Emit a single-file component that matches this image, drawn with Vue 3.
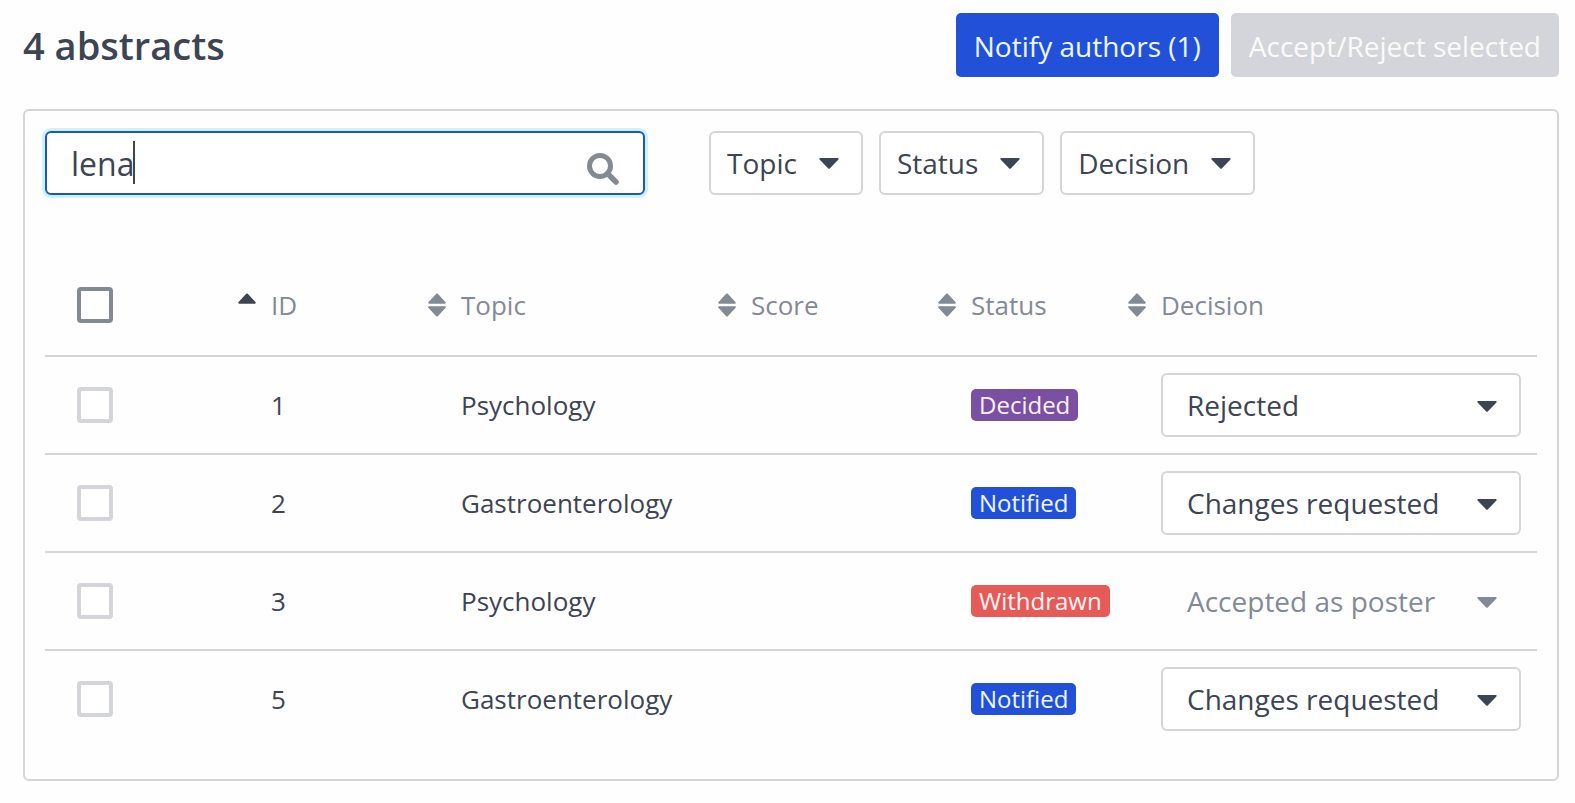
<script setup>
import { ref } from 'vue'

const query = ref('lena')
const filters = ['Topic', 'Status', 'Decision']
const columns = [
  { label: 'ID', sorted: true },
  { label: 'Topic' },
  { label: 'Score' },
  { label: 'Status' },
  { label: 'Decision' },
]
const options = ['Rejected', 'Changes requested', 'Accepted as poster']
const rows = ref([
  { id: 1, topic: 'Psychology', status: 'Decided', decision: 'Rejected' },
  { id: 2, topic: 'Gastroenterology', status: 'Notified', decision: 'Changes requested' },
  { id: 3, topic: 'Psychology', status: 'Withdrawn', decision: 'Accepted as poster', locked: true },
  { id: 5, topic: 'Gastroenterology', status: 'Notified', decision: 'Changes requested' },
])
</script>

<template>
  <main class="page">
    <header class="top">
      <h1>4 abstracts</h1>
      <div class="actions">
        <button type="button" class="btn primary">Notify authors (1)</button>
        <button type="button" class="btn muted" disabled>Accept/Reject selected</button>
      </div>
    </header>

    <section class="card">
      <div class="toolbar">
        <div class="search">
          <input v-model="query" type="text" aria-label="Search abstracts" />
          <span class="cursor"></span>
          <svg class="glass" viewBox="0 0 32 32" aria-hidden="true">
            <circle cx="13" cy="13" r="10.5" fill="none" stroke="currentColor" stroke-width="5" />
            <path d="M20.500 20.500L29 29" fill="none" stroke="currentColor" stroke-width="5.500" stroke-linecap="round" />
          </svg>
        </div>
        <div class="filters">
          <button v-for="f in filters" :key="f" type="button" class="filter">
            {{ f }}
            <svg class="caret" viewBox="0 0 20 11" aria-hidden="true">
              <path d="M1.200 0H18.800Q20.300 .4 19.200 1.700L11 10.300Q10 11.300 9 10.300L.8 1.700Q-.3 .4 1.200 0Z" />
            </svg>
          </button>
        </div>
      </div>

      <table>
        <colgroup>
          <col class="c-check" />
          <col class="c-id" />
          <col class="c-topic" />
          <col class="c-score" />
          <col class="c-status" />
          <col />
        </colgroup>
        <thead>
          <tr>
            <th class="check"><input type="checkbox" aria-label="Select all" /></th>
            <th v-for="c in columns" :key="c.label">
              <button type="button" class="sort">
                <svg viewBox="0 0 18 24" aria-hidden="true" :class="{ on: c.sorted }">
                  <path d="M1 10.700Q-.5 10.200 .6 8.900L8.200 .8Q9 0 9.800 .8L17.400 8.900Q18.500 10.200 17 10.700Z" />
                  <path v-if="!c.sorted" d="M1 13.300Q-.5 13.800 .6 15.100L8.200 23.200Q9 24 9.800 23.200L17.400 15.100Q18.500 13.800 17 13.300Z" />
                </svg>
                {{ c.label }}
              </button>
            </th>
          </tr>
        </thead>
        <tbody>
          <tr v-for="r in rows" :key="r.id">
            <td class="check"><input type="checkbox" :aria-label="`Select abstract ${r.id}`" /></td>
            <td>{{ r.id }}</td>
            <td>{{ r.topic }}</td>
            <td></td>
            <td><span class="badge" :class="r.status.toLowerCase()">{{ r.status }}</span></td>
            <td class="decision">
              <div class="picker" :class="{ locked: r.locked }">
                <select v-model="r.decision" :disabled="r.locked" :aria-label="`Decision for abstract ${r.id}`">
                  <option v-for="o in options" :key="o">{{ o }}</option>
                </select>
                <svg class="caret" viewBox="0 0 20 11" aria-hidden="true">
                  <path d="M1.200 0H18.800Q20.300 .4 19.200 1.700L11 10.300Q10 11.300 9 10.300L.8 1.700Q-.3 .4 1.200 0Z" />
                </svg>
              </div>
            </td>
          </tr>
        </tbody>
      </table>
    </section>
  </main>
</template>

<style>
body {
  background: #fefefe;
}
</style>

<style scoped>
.page,
.page * {
  box-sizing: border-box;
}
.page {
  padding: 13px 16px 22px 23px;
  font-family: "Open Sans", "Noto Sans", sans-serif;
  font-size: 28px;
  color: #3d4452;
}
button,
input,
select {
  font-family: inherit;
  color: inherit;
  margin: 0;
}
.top {
  display: flex;
  align-items: center;
  justify-content: space-between;
  margin-bottom: 32px;
}
h1 {
  margin: 0;
  font-size: 38px;
  font-weight: 600;
  line-height: 64px;
}
.actions {
  display: flex;
  gap: 12px;
}
.btn {
  height: 64px;
  padding: 2px 18px 0;
  border: 0;
  border-radius: 5px;
  font-size: 28px;
}
.btn.primary {
  background: #2350d8;
  color: #ebf8ff;
}
.btn.muted {
  background: #d4d5da;
  color: #fafafb;
}
.card {
  padding: 20px 20px 32px;
  border: 2px solid #d4d5d8;
  border-radius: 6px;
}
.toolbar {
  display: flex;
  gap: 64px;
  margin-bottom: 60px;
}
.search {
  position: relative;
  flex: 0 1 600px;
}
.search input {
  display: block;
  width: 100%;
  height: 64px;
  padding: 0 80px 0 24px;
  border: 2px solid #2052c8;
  border-radius: 6px;
  box-shadow: 0 0 0 3px #cdf3f6;
  background: #fff;
  font-size: 32px;
  outline: none;
}
.cursor {
  position: absolute;
  left: 88px;
  top: 10px;
  width: 2px;
  height: 43px;
  background: #3d4452;
}
.glass {
  position: absolute;
  right: 26px;
  top: 22px;
  width: 32px;
  height: 32px;
  color: #848a94;
}
.filters {
  display: flex;
  gap: 16px;
}
.filter {
  display: flex;
  align-items: center;
  gap: 22px;
  height: 64px;
  padding: 0 22px 0 16px;
  border: 2px solid #d4d5d8;
  border-radius: 6px;
  background: #fff;
  font-size: 28px;
}
.caret {
  width: 20px;
  height: 11px;
  fill: currentColor;
}
table {
  width: 100%;
  table-layout: fixed;
  border-collapse: separate;
  border-spacing: 0;
  font-size: 26px;
}
.c-check {
  width: 177px;
}
.c-id,
.c-status {
  width: 190px;
}
.c-topic {
  width: 290px;
}
.c-score {
  width: 220px;
}
th {
  height: 102px;
  padding: 0 0 0 16px;
  border-bottom: 2px solid #d4d5d8;
  font-weight: 400;
  text-align: left;
}
td {
  height: 98px;
  padding: 0 0 0 49px;
  border-bottom: 2px solid #d4d5d8;
}
tbody tr:last-child td {
  height: 96px;
  border-bottom: 0;
}
.check {
  padding-left: 32px;
}
.check input {
  display: block;
  appearance: none;
  width: 36px;
  height: 36px;
  border: 4px solid #d4d5da;
  border-radius: 4px;
  background: #fff;
}
th.check input {
  border-color: #848a94;
}
.sort {
  display: flex;
  align-items: center;
  gap: 15px;
  padding: 0;
  border: 0;
  background: none;
  color: #848a94;
  font-size: 26px;
}
.sort svg {
  width: 18px;
  height: 24px;
  fill: currentColor;
}
.sort svg.on {
  color: #3d4452;
}
.badge {
  display: block;
  width: fit-content;
  padding: 0 8px;
  border-radius: 5px;
  font-size: 24px;
  line-height: 32px;
}
.decided {
  background: #7b50a2;
  color: #faf0ff;
}
.notified {
  background: #2350d8;
  color: #ebf8ff;
}
.withdrawn {
  background: #e65b58;
  color: #fff5f5;
}
.decision {
  padding-right: 16px;
}
.picker {
  position: relative;
}
.picker select {
  display: block;
  appearance: none;
  width: 100%;
  height: 64px;
  padding: 0 56px 0 24px;
  border: 2px solid #d4d5d8;
  border-radius: 6px;
  background: #fff;
  font-size: 28px;
  opacity: 1;
}
.picker .caret {
  position: absolute;
  right: 24px;
  top: 28px;
  pointer-events: none;
}
.picker.locked {
  color: #848a94;
}
.picker.locked select {
  border-color: transparent;
  background: transparent;
}
</style>
